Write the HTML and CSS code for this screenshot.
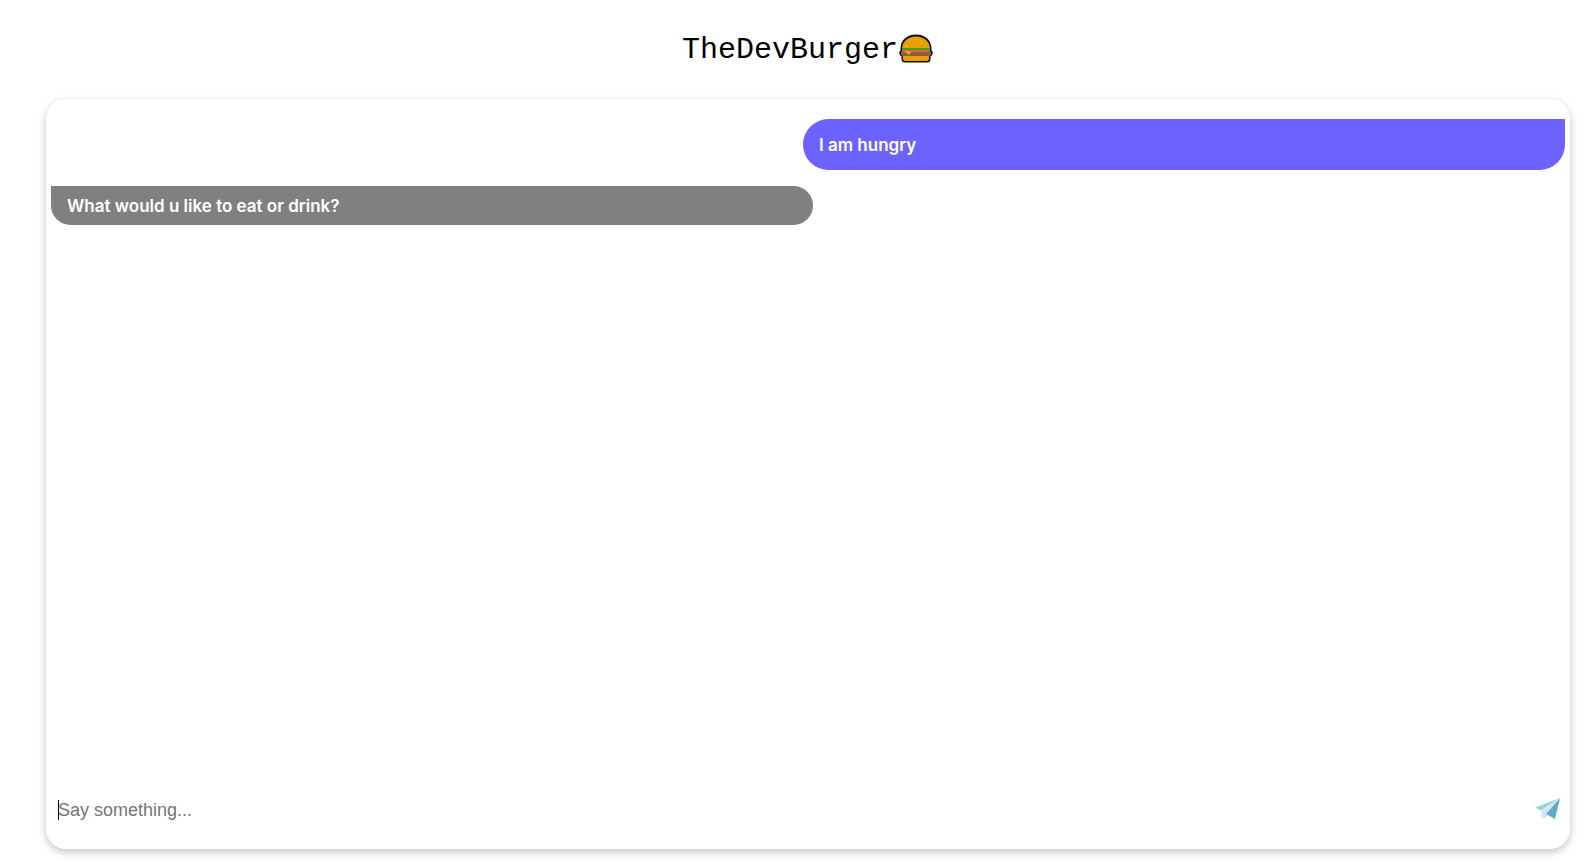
FILE: index.html
```html
<!DOCTYPE html>
<html lang="en">
<head>
<meta charset="utf-8">
<title>TheDevBurger</title>
<link rel="stylesheet" href="styles.css">
</head>
<body>
<header class="header">
  <h1 class="title">TheDevBurger</h1>
  <svg class="burger" viewBox="0 0 36 32" aria-hidden="true">
    <path d="M2.500 14C3 5 10 .5 18 .5S33 5 33.500 14v2.500l1.500 2-1 3-1.500 1v2.500q0 3.500-3.500 3.500H7q-3.500 0-3.500-3.500v-2.500L2 21.500l-1-3 1.500-2z" fill="#111"/>
    <path d="M4 14.500C4.500 6.500 11 2.500 18 2.500s13.500 4 14 12z" fill="#e8a000"/>
    <path d="M4 14h28v2H4z" fill="#3f9f1f"/>
    <path d="M4 16h28v2H4z" fill="#e8603f"/>
    <path d="M3 18h30v3l-2 1.500H5L3 21z" fill="#915b36"/>
    <path d="M6 17.500h8l-2 1.500-1 2-1.500-1.500z" fill="#f6b51d"/>
    <path d="M5 22h26v3q0 2-2 2H7q-2 0-2-2z" fill="#e8a000"/>
    <path d="M11 7h1m5-2h1m5 2h1m-9 3h1m6 0h1m4 1h1M8 11h1" stroke="#ffc64a"/>
  </svg>
</header>
<main class="chat">
  <section class="messages" aria-label="Messages">
    <p class="message message-user">I am hungry</p>
    <p class="message message-bot">What would u like to eat or drink?</p>
  </section>
  <form class="composer">
    <div class="field">
      <input class="composer-input" type="text" aria-label="Message" placeholder="Say something..." autocomplete="off">
      <span class="caret" aria-hidden="true"></span>
    </div>
    <button class="send" type="button" aria-label="Send">
      <svg class="send-icon" viewBox="0 0 26 27" aria-hidden="true">
        <path d="M25 1 0 10.500l6 3z" fill="#8fd9cf"/>
        <path d="M25 1 6 13.500l1.500 8.500L11 17z" fill="#d9e2fa"/>
        <path d="M25 1 11 17l9 5z" fill="#5fa9c9"/>
        <path d="m11 17-3.500 5 5.500-4z" fill="#c3d0f2"/>
      </svg>
    </button>
  </form>
</main>
</body>
</html>
```
FILE: styles.css
```css
* { box-sizing: border-box; }

body {
  margin: 0;
  min-height: 100vh;
  padding: 0 15px 13px 46px;
  display: flex;
  flex-direction: column;
  background: #fff;
  font-family: "Liberation Sans", Arial, sans-serif;
}

.header {
  height: 99px;
  display: flex;
  align-items: center;
  justify-content: center;
}

.title {
  margin: 0;
  font: 400 30px/40px "Liberation Mono", monospace;
  color: #000;
}

.burger { width: 36px; height: 32px; }

.chat {
  flex: 1;
  display: flex;
  flex-direction: column;
  padding: 20px 5px 19px;
  border-radius: 20px;
  box-shadow: 0 3px 8px rgba(0, 0, 0, 0.24);
}

.messages {
  flex: 1;
  display: flex;
  flex-direction: column;
  gap: 16px;
}

.message {
  margin: 0;
  width: calc(50% + 5px);
  padding: 9px 16px 7px;
  color: #fff;
  font: 600 17px/23px Inter, sans-serif;
}

.message-user {
  align-self: flex-end;
  padding-block: 15px 13px;
  border-radius: 26px 0 26px 26px;
  background: #6c63ff;
}

.message-bot {
  border-radius: 0 20px 20px 20px;
  background: #808080;
}

.composer {
  display: flex;
  align-items: center;
  padding: 0 4px 0 7px;
}

.field {
  position: relative;
  flex: 1;
  display: flex;
}

.composer-input {
  flex: 1;
  min-width: 0;
  height: 40px;
  padding: 0;
  border: 0;
  outline: 0;
  background: transparent;
  font: 18px "Liberation Sans", Arial, sans-serif;
}

.composer-input::placeholder { color: #757575; }

.caret {
  position: absolute;
  top: 10px;
  left: 0;
  width: 1px;
  height: 20px;
  background: #000;
}

.send {
  padding: 0;
  border: 0;
  background: none;
  display: flex;
  cursor: pointer;
}

.send-icon { width: 26px; height: 27px; }
```
